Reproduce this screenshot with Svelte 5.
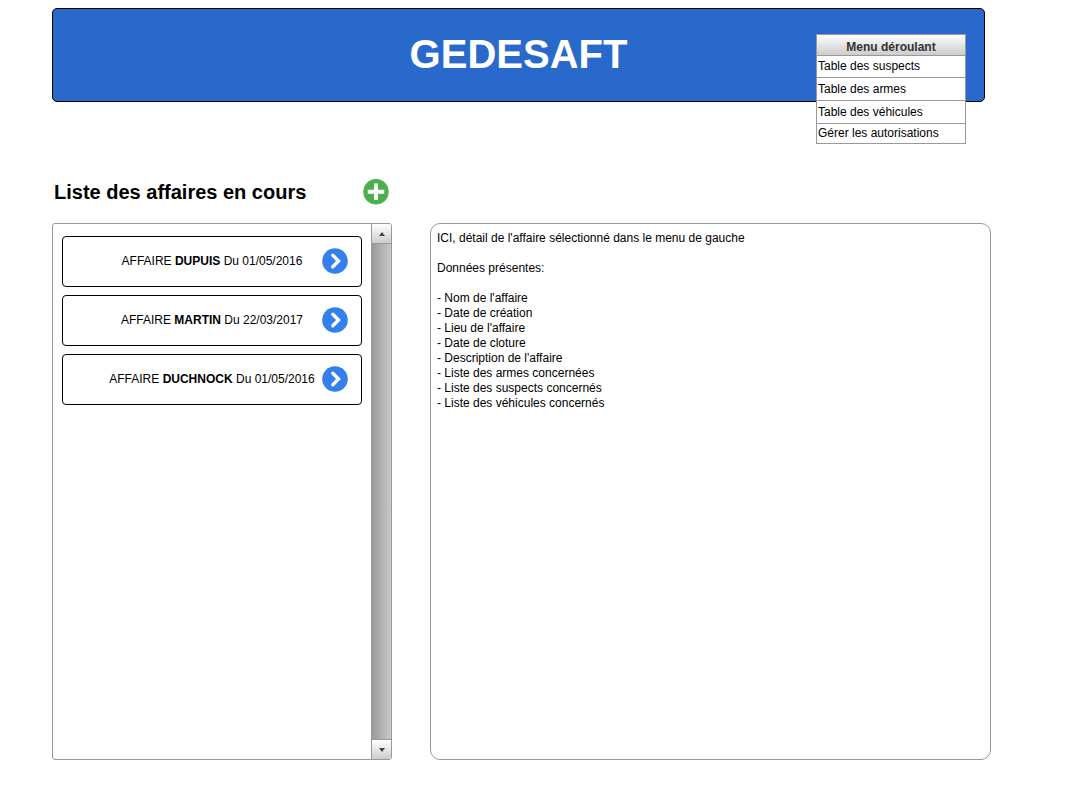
<script>
  const menu = [
    'Table des suspects',
    'Table des armes',
    'Table des véhicules',
    'Gérer les autorisations'
  ];

  const cases = [
    { name: 'DUPUIS', date: '01/05/2016' },
    { name: 'MARTIN', date: '22/03/2017' },
    { name: 'DUCHNOCK', date: '01/05/2016' }
  ];

  const fields = [
    "Nom de l'affaire",
    'Date de création',
    "Lieu de l'affaire",
    'Date de cloture',
    "Description de l'affaire",
    'Liste des armes concernées',
    'Liste des suspects concernés',
    'Liste des véhicules concernés'
  ];
</script>

<div class="page">
  <header class="banner">
    <h1>GEDESAFT</h1>
    <nav class="menu" aria-label="Menu déroulant">
      <div class="menu-title">Menu déroulant</div>
      <ul>
        {#each menu as item}
          <li><a href="#menu">{item}</a></li>
        {/each}
      </ul>
    </nav>
  </header>

  <div class="heading">
    <h2>Liste des affaires en cours</h2>
    <button class="round" aria-label="Ajouter une affaire">
      <svg viewBox="0 0 26 26" width="26" height="26" aria-hidden="true">
        <circle cx="13" cy="12.8" r="12.7" fill="#4bae4f" />
        <path d="M13 4.5v16.5M4.8 12.8h16.4" stroke="#fff" stroke-width="4" fill="none" />
      </svg>
    </button>
  </div>

  <main>
    <section class="list" aria-label="Affaires en cours">
      <ul class="cases">
        {#each cases as c}
          <li class="case">
            <span class="label">AFFAIRE <b>{c.name}</b> Du {c.date}</span>
            <button class="round" aria-label="Ouvrir l'affaire {c.name}">
              <svg viewBox="0 0 26 26" width="26" height="26" aria-hidden="true">
                <circle cx="13" cy="13" r="12.8" fill="#337fee" />
                <path d="M10.8 7.3l5.7 5.7-5.7 5.7" stroke="#fff" stroke-width="3.4" stroke-linecap="round" stroke-linejoin="miter" fill="none" />
              </svg>
            </button>
          </li>
        {/each}
      </ul>
      <div class="scroll">
        <button class="arrow" aria-label="Défiler vers le haut">
          <svg viewBox="0 0 6 4" width="6" height="4" aria-hidden="true"><path d="M3 0l3 4H0z" fill="#444" /></svg>
        </button>
        <div class="track"></div>
        <button class="arrow down" aria-label="Défiler vers le bas">
          <svg viewBox="0 0 6 4" width="6" height="4" aria-hidden="true"><path d="M3 4l3-4H0z" fill="#444" /></svg>
        </button>
      </div>
    </section>

    <section class="detail" aria-label="Détail de l'affaire">
      <p>ICI, détail de l'affaire sélectionné dans le menu de gauche</p>
      <p>Données présentes:</p>
      <ul>
        {#each fields as field}
          <li>- {field}</li>
        {/each}
      </ul>
    </section>
  </main>
</div>

<style>
  :global(body) {
    background: #fff;
  }

  .page {
    box-sizing: border-box;
    min-height: 100vh;
    display: flex;
    flex-direction: column;
    padding: 8px 85px 36px 52px;
    font-family: "Liberation Sans", Arial, sans-serif;
    font-size: 12px;
    color: #000;
  }

  h1, h2, p, ul {
    margin: 0;
    padding: 0;
  }

  ul {
    list-style: none;
  }

  button {
    padding: 0;
    border: 0;
    background: none;
    cursor: pointer;
  }

  svg {
    display: block;
  }

  .banner {
    position: relative;
    margin-right: 6px;
    padding: 22px 0 24px;
    border: 1px solid #000;
    border-radius: 5px;
    background: #2969cb;
    color: #fff;
    text-align: center;
  }

  h1 {
    font-size: 40px;
    line-height: 46px;
  }

  .menu {
    position: absolute;
    top: 25px;
    right: 18px;
    box-sizing: border-box;
    width: 150px;
    border: 1px solid #999;
    background: #fff;
    text-align: left;
  }

  .menu-title {
    height: 20px;
    background: linear-gradient(#fff, #ccc);
    color: #333;
    font-weight: bold;
    line-height: 24px;
    text-align: center;
  }

  .menu a {
    display: block;
    padding-left: 1px;
    border-top: 1px solid #999;
    color: #000;
    line-height: 22px;
    text-decoration: none;
  }

  .menu li:first-child a {
    line-height: 21px;
  }

  .menu li:last-child a {
    line-height: 19px;
  }

  .heading {
    display: flex;
    align-items: center;
    justify-content: space-between;
    box-sizing: border-box;
    width: 340px;
    margin: 77px 0 18px;
    padding: 0 3px 0 2px;
  }

  h2 {
    font-size: 20px;
    line-height: 26px;
  }

  .round {
    width: 26px;
    height: 26px;
    border-radius: 50%;
  }

  main {
    flex: 1;
    display: grid;
    grid-template-columns: 340px 1fr;
    gap: 38px;
  }

  .list {
    display: flex;
    border: 1px solid #999;
    border-radius: 3px;
    overflow: hidden;
  }

  .cases {
    flex: 1;
    display: flex;
    flex-direction: column;
    gap: 8px;
    padding: 12px 9px;
  }

  .case {
    display: grid;
    grid-template-columns: 26px 1fr 26px;
    align-items: center;
    padding: 11px 13px 12px;
    border: 1px solid #000;
    border-radius: 4px;
  }

  .label {
    grid-column: 2;
    text-align: center;
    white-space: nowrap;
  }

  .scroll {
    box-sizing: border-box;
    display: flex;
    flex-direction: column;
    width: 20px;
    border-left: 1px solid #999;
  }

  .track {
    flex: 1;
    background: linear-gradient(90deg, #999, #c8c8c8);
  }

  .arrow {
    display: grid;
    place-items: center;
    height: 20px;
    border-bottom: 1px solid #999;
    background: linear-gradient(#fff, #ccc);
  }

  .down {
    border-top: 1px solid #999;
    border-bottom: 0;
  }

  .detail {
    padding: 7px 6px;
    border: 1px solid #999;
    border-radius: 10px;
    line-height: 15px;
  }

  .detail p {
    margin-bottom: 15px;
  }
</style>
